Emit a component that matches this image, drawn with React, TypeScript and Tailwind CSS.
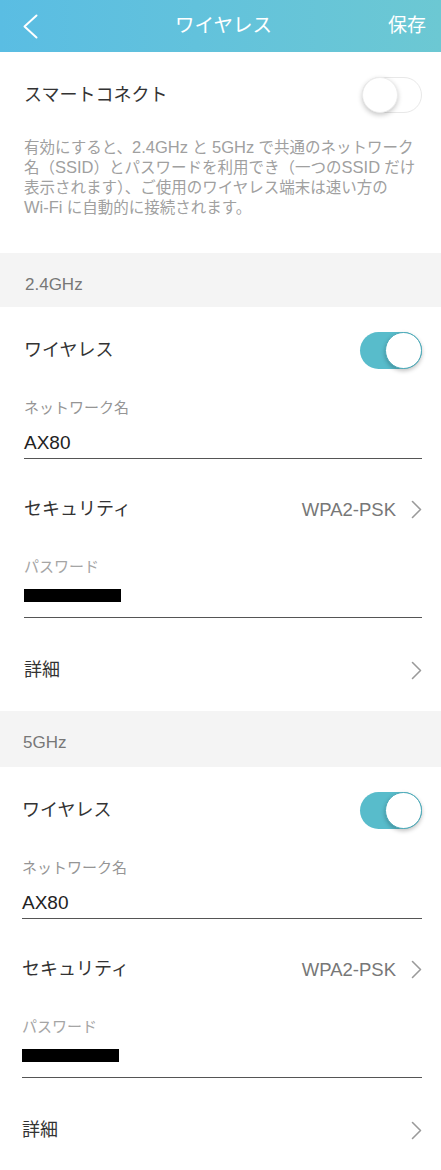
import React from "react";

function Chevron() {
  return (
    <svg width="11" height="19" viewBox="0 0 11 19" fill="none">
      <path d="M1.5 1.5 L9.5 9.5 L1.5 17.5" stroke="#9a9a9a" strokeWidth="1.6" strokeLinecap="round" strokeLinejoin="round" />
    </svg>
  );
}

function Toggle({ on }: { on: boolean }) {
  if (on) {
    return (
      <div className="relative w-[62px] h-[37px] rounded-full bg-[#58bccb]">
        <div className="absolute right-0 top-0 w-[37px] h-[37px] rounded-full bg-white border-[1.5px] border-[#4aa9b8] shadow-[0_2px_4px_rgba(0,0,0,0.25)]" />
      </div>
    );
  }
  return (
    <div className="relative w-[60px] h-[36px] rounded-full bg-white border border-[#e8e8e8]">
      <div className="absolute left-[-1px] top-[-1px] w-[36px] h-[36px] rounded-full bg-white border border-[#ececec] shadow-[0_2px_5px_rgba(0,0,0,0.22)]" />
    </div>
  );
}

function Band({ title, first }: { title: string; first: boolean }) {
  const pad = first ? "pl-[24px]" : "pl-[22px]";
  return (
    <div>
      <div className={`${first ? "h-[54px] pl-[25px]" : "h-[56px] pl-[23px]"} bg-[#f4f4f4] pt-[22px] text-[17px] leading-[20px] text-[#777]`}>
        {title}
      </div>
      <div className={`${pad} pr-[19px]`}>
        <div className="h-[86px] flex items-center justify-between">
          <span className="text-[18px] text-[#333]">ワイヤレス</span>
          <Toggle on />
        </div>
        <div className="pt-[5px] text-[15px] leading-[20px] text-[#959595]">ネットワーク名</div>
        <div className="mt-[13px] h-[27.5px] border-b-[1.5px] border-[#555] text-[19px] leading-[24px] text-[#222]">AX80</div>
        <div className="mt-[11px] h-[80px] flex items-center justify-between">
          <span className="text-[18px] text-[#333]">セキュリティ</span>
          <div className="flex items-center gap-[15px]">
            <span className="text-[18.5px] text-[#777]">WPA2-PSK</span>
            <Chevron />
          </div>
        </div>
        <div className="mt-[7px] text-[15px] leading-[20px] text-[#a5a5a5]">パスワード</div>
        <div className="mt-[12px] h-[29.5px] border-b-[1.5px] border-[#555]">
          <div className="mt-[6px] w-[97px] h-[13px] bg-black" />
        </div>
        <div className="mt-[11px] h-[82px] flex items-center justify-between">
          <span className="text-[18px] text-[#333]">詳細</span>
          <Chevron />
        </div>
      </div>
    </div>
  );
}

export default function App() {
  return (
    <div className="w-[441px] min-h-[1170px] bg-white font-['Liberation_Sans','Noto_Sans_CJK_JP',sans-serif]">
      <div className="h-[52px] flex items-center bg-gradient-to-r from-[#5abde3] to-[#6cc8d3] text-white">
        <div className="w-[70px] pl-[22px] flex items-center">
          <svg width="16" height="25" viewBox="0 0 16 25" fill="none">
            <path d="M14.5 1.5 L2.5 12.5 L14.5 23.5" stroke="white" strokeWidth="2" strokeLinecap="round" strokeLinejoin="round" />
          </svg>
        </div>
        <div className="flex-1 text-center text-[19.5px] pl-[6px]">ワイヤレス</div>
        <div className="w-[70px] pr-[15px] text-right text-[19px]">保存</div>
      </div>

      <div className="px-[24px] pr-[19px] h-[86px] flex items-center justify-between">
        <span className="text-[18px] text-[#333]">スマートコネクト</span>
        <Toggle on={false} />
      </div>
      <div className="px-[24px] pb-[35px] text-[15.5px] leading-[20px] text-[#a0a0a0]">
        <div className="h-[20px] whitespace-nowrap">有効にすると、<span className="text-[16.5px] leading-[16px]">2.4GHz</span> と <span className="text-[16.5px] leading-[16px]">5GHz</span> で共通のネットワーク</div>
        <div className="h-[20px] whitespace-nowrap">名（<span className="text-[16.5px] leading-[16px]">SSID</span>）とパスワードを利用でき（一つの<span className="text-[16.5px] leading-[16px]">SSID</span> だけ</div>
        <div className="h-[20px] whitespace-nowrap">表示されます）、ご使用のワイヤレス端末は速い方の</div>
        <div className="h-[20px] whitespace-nowrap"><span className="text-[16.5px] leading-[16px]">Wi-Fi</span> に自動的に接続されます。</div>
      </div>

      <Band title="2.4GHz" first />
      <Band title="5GHz" first={false} />
    </div>
  );
}
